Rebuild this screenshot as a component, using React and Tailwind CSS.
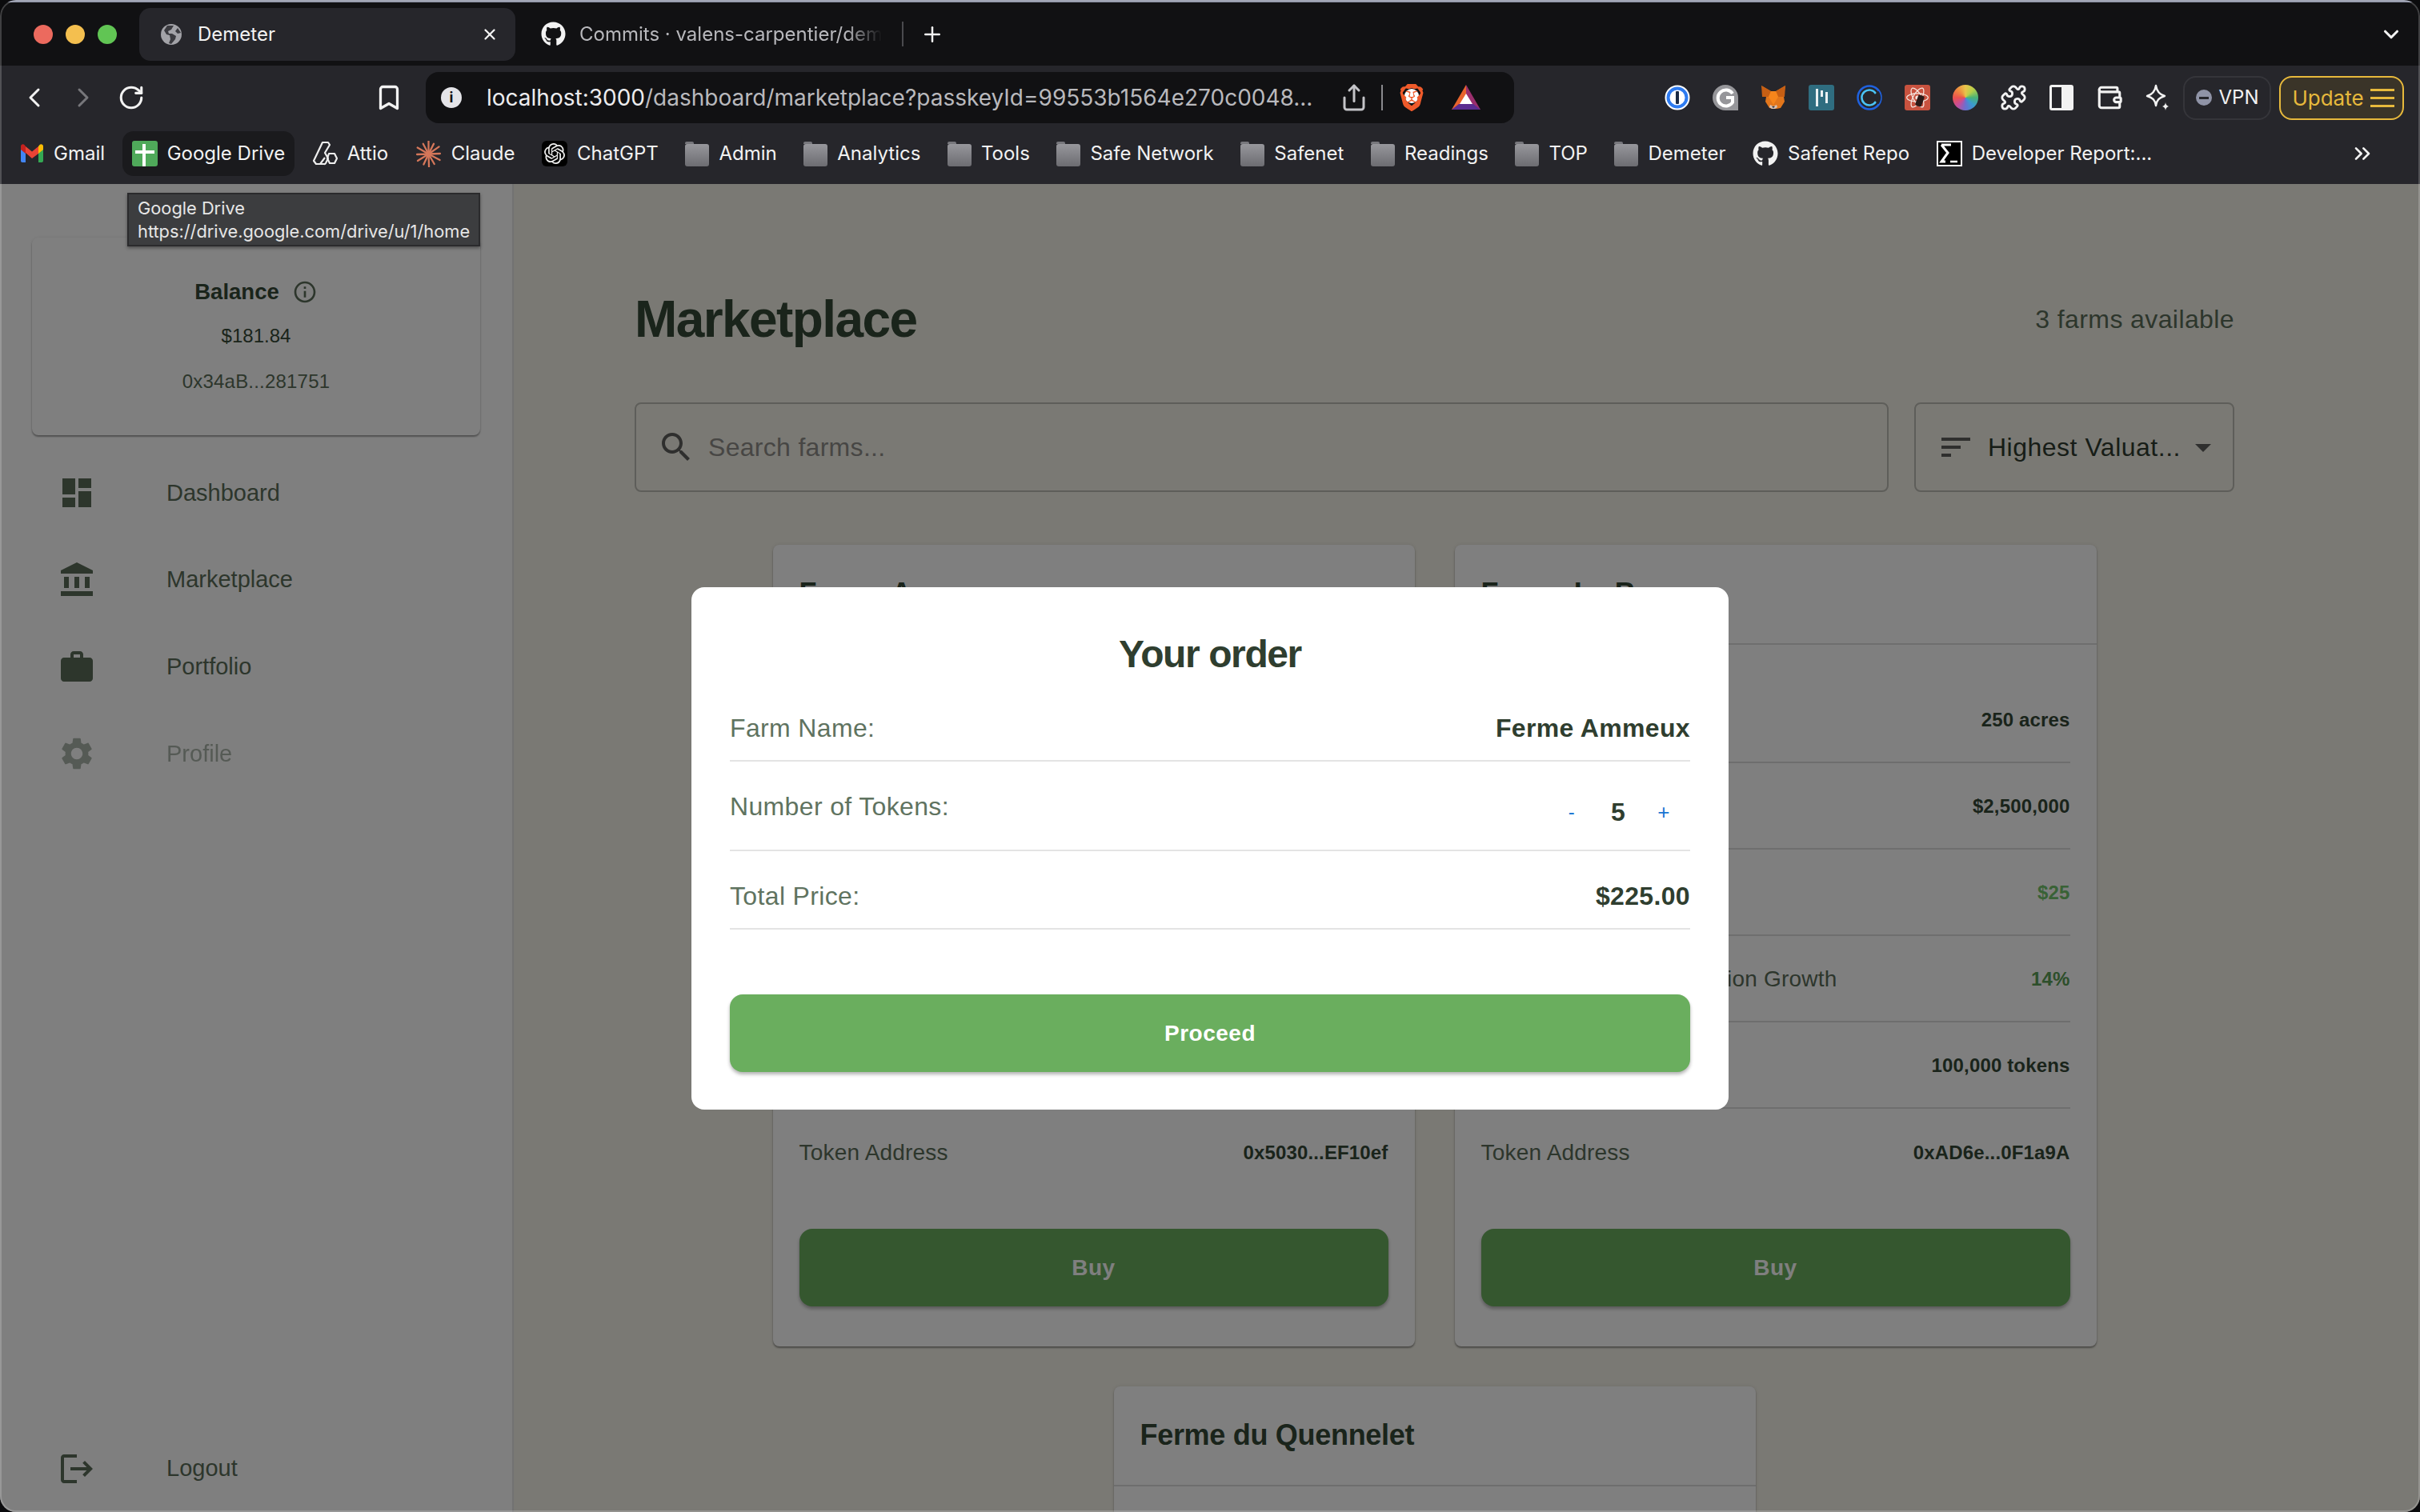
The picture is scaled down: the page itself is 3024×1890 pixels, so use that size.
import { ChevronLeft, ChevronRight, RotateCw, Bookmark, Share, Puzzle, Wallet, Plus, X, ChevronDown, ChevronsRight } from "lucide-react";
import { FaGithub } from "react-icons/fa";
import { SiOpenai, SiBrave, SiReact } from "react-icons/si";

/* ── MUI icon paths ─────────────────────────────────── */
const paths = {
  dashboard: "M3 13h8V3H3v10zm0 8h8v-6H3v6zm10 0h8V11h-8v10zm0-18v6h8V3h-8z",
  bank: "M4 10h3v7H4zM10.5 10h3v7h-3zM2 19h20v3H2zM17 10h3v7h-3zM12 1 2 6v2h20V6z",
  work: "M20 6h-4V4c0-1.11-.89-2-2-2h-4c-1.11 0-2 .89-2 2v2H4c-1.11 0-1.99.89-1.99 2L2 19c0 1.11.89 2 2 2h16c1.11 0 2-.89 2-2V8c0-1.11-.89-2-2-2zm-6 0h-4V4h4v2z",
  settings: "M19.14 12.94c.04-.3.06-.61.06-.94 0-.32-.02-.64-.07-.94l2.03-1.58c.18-.14.23-.41.12-.61l-1.92-3.32c-.12-.22-.37-.29-.59-.22l-2.39.96c-.5-.38-1.03-.7-1.62-.94l-.36-2.54c-.04-.24-.24-.41-.48-.41h-3.84c-.24 0-.43.17-.47.41l-.36 2.54c-.59.24-1.13.57-1.62.94l-2.39-.96c-.22-.08-.47 0-.59.22L2.74 8.87c-.12.21-.08.47.12.61l2.03 1.58c-.05.3-.09.63-.09.94s.02.64.07.94l-2.03 1.58c-.18.14-.23.41-.12.61l1.92 3.32c.12.22.37.29.59.22l2.39-.96c.5.38 1.03.7 1.62.94l.36 2.54c.05.24.24.41.48.41h3.84c.24 0 .44-.17.47-.41l.36-2.54c.59-.24 1.13-.56 1.62-.94l2.39.96c.22.08.47 0 .59-.22l1.92-3.32c.12-.22.07-.47-.12-.61l-2.01-1.58zM12 15.6c-1.98 0-3.6-1.62-3.6-3.6s1.62-3.6 3.6-3.6 3.6 1.62 3.6 3.6-1.62 3.6-3.6 3.6z",
  logout: "m17 7-1.41 1.41L18.17 11H8v2h10.17l-2.58 2.58L17 17l5-5zM4 5h8V3H4c-1.1 0-2 .9-2 2v14c0 1.1.9 2 2 2h8v-2H4V5z",
  search: "M15.5 14h-.79l-.28-.27C15.41 12.59 16 11.11 16 9.5 16 5.91 13.09 3 9.5 3S3 5.91 3 9.5 5.91 16 9.5 16c1.61 0 3.09-.59 4.23-1.57l.27.28v.79l5 4.99L20.49 19l-4.99-5zm-6 0C7.01 14 5 11.99 5 9.5S7.01 5 9.5 5 14 7.01 14 9.5 11.99 14 9.5 14z",
  sort: "M3 18h6v-2H3v2zM3 6v2h18V6H3zm0 7h12v-2H3v2z",
  caret: "m7 10 5 5 5-5z",
  info: "M11 7h2v2h-2zm0 4h2v6h-2zm1-9C6.48 2 2 6.48 2 12s4.48 10 10 10 10-4.48 10-10S17.52 2 12 2zm0 18c-4.41 0-8-3.59-8-8s3.59-8 8-8 8 3.59 8 8-3.59 8-8 8z",
};

function MuiIcon({ d, className }) {
  return (
    <svg viewBox="0 0 24 24" className={className} fill="currentColor">
      <path d={d} />
    </svg>
  );
}

/* ── Browser chrome icons ───────────────────────────── */
function Globe() {
  return (
    <svg viewBox="0 0 28 28" className="w-[28px] h-[28px]">
      <circle cx="14" cy="14" r="13" fill="#a3a3a8" />
      <path d="M9 3 5 9l3 5 4 1 1 5-2 5 3 1 5-6 1-4-5-3-4 0-1-3 4-2 3-5z" fill="#3b3b40" />
      <path d="M22 6l-3 4 3 3 4-1z" fill="#3b3b40" />
    </svg>
  );
}

function Gmail() {
  return (
    <svg viewBox="0 0 30 24" className="w-[30px] h-[24px]">
      <path d="M1 6v15c0 1.2.8 2 2 2h4V11z" fill="#4285f4" />
      <path d="M29 6v15c0 1.2-.8 2-2 2h-4V11z" fill="#34a853" />
      <path d="M23 3v9l6-5V3c0-2.5-2.800-3.500-4.500-2z" fill="#fbbc04" />
      <path d="M7 11V3l8 6.500L23 3v9l-8 6z" fill="#ea4335" />
      <path d="M1 3v4l6 5V3L5.500 1C3.800-.500 1 .500 1 3z" fill="#c5221f" />
    </svg>
  );
}

function DriveTile() {
  return (
    <div className="w-[32px] h-[32px] rounded-[3px] bg-[#4fa95a] relative">
      <div className="absolute left-[13px] top-[4px] bottom-0 w-[4px] bg-white" />
      <div className="absolute left-[4px] right-[4px] top-[12px] h-[4px] bg-white" />
    </div>
  );
}

function Attio() {
  return (
    <svg viewBox="0 0 32 32" className="w-[32px] h-[32px]" fill="none" stroke="#eee" strokeWidth="2.200" strokeLinejoin="round">
      <path d="M13 2h7l2 3-6 10 4 7-3 6a2 2 0 0 1-2 1H5l-3-4z" />
      <path d="M21 16l7 0 3 6-3 6-6 0-3-6z" />
      <path d="M10 29l6-8" />
    </svg>
  );
}

function Claude() {
  const rays = [0, 27, 55, 88, 118, 150, 178, 205, 238, 268, 300, 332];
  return (
    <svg viewBox="0 0 32 32" className="w-[33px] h-[33px]" stroke="#d5775a" strokeWidth="2.200" strokeLinecap="round">
      {rays.map((a, i) => (
        <line key={a} x1="16" y1="16" x2="16" y2={i % 2 ? 2 : 0.5} transform={`rotate(${a} 16 16)`} />
      ))}
    </svg>
  );
}

function Folder() {
  return (
    <svg viewBox="0 0 30 32" className="w-[30px] h-[32px]">
      <defs>
        <linearGradient id="folderFill" x1="0" y1="0" x2="0" y2="1">
          <stop offset="0" stopColor="#97979c" />
          <stop offset="1" stopColor="#6c6c71" />
        </linearGradient>
      </defs>
      <path d="M0 3a2 2 0 0 1 2-2h7a2 2 0 0 1 2 2v1H0z" fill="#77777c" />
      <rect x="0" y="4" width="30" height="28" rx="3" fill="url(#folderFill)" />
    </svg>
  );
}

function DevReport() {
  return (
    <svg viewBox="0 0 32 32" className="w-[32px] h-[32px]">
      <rect x="1" y="1" width="30" height="30" fill="#000" stroke="#fff" strokeWidth="2" />
      <path d="M6 5h12M6 5l8 10-8 11h5" fill="none" stroke="#fff" strokeWidth="3" />
      <path d="M17 26h9" stroke="#fff" strokeWidth="2.500" />
    </svg>
  );
}

function BatTriangle() {
  return (
    <svg viewBox="0 0 38 32" className="w-[38px] h-[32px]">
      <path d="M19 0 1 31h18z" fill="#e8642e" />
      <path d="M19 0l18 31H19z" fill="#9b2f6e" />
      <path d="M1 31l9-7h18l9 7z" fill="#5b2d91" />
      <path d="M19 11l8 13H11z" fill="#fff" />
    </svg>
  );
}

function OnePassword() {
  return (
    <svg viewBox="0 0 32 32" className="w-[32px] h-[32px]">
      <circle cx="16" cy="16" r="15.500" fill="#fff" />
      <circle cx="16" cy="16" r="11.500" fill="#fff" stroke="#2e7bf0" strokeWidth="4" />
      <rect x="14" y="8" width="4" height="16" rx="1" fill="#1a2a44" />
    </svg>
  );
}

function Grammarly() {
  return (
    <svg viewBox="0 0 32 32" className="w-[32px] h-[32px]">
      <path d="M16 0a16 16 0 0 1 16 16v16H16A16 16 0 0 1 16 0z" fill="#96969a" />
      <path d="M25 11a10 10 0 1 0 0 11v-6h-8" fill="none" stroke="#fff" strokeWidth="4" />
    </svg>
  );
}

function Fox() {
  return (
    <svg viewBox="0 0 32 32" className="w-[32px] h-[32px]">
      <path d="M1 1l12 7h6l12-7-2 14 1 6-5 8-5 1h-4l-5-1-5-8 1-6z" fill="#e2761b" />
      <path d="M1 1l12 7-3 7-8 0z" fill="#c65f14" />
      <path d="M31 1L19 8l3 7 8 0z" fill="#c65f14" />
      <path d="M13 8h6l3 7-6 10-6-10z" fill="#f6851b" />
      <path d="M12 25l4 2 4-2 1 3-3 2h-4l-3-2z" fill="#d7c1b3" />
      <path d="M14 27h4l-2 2z" fill="#233447" />
    </svg>
  );
}

function TealBars() {
  return (
    <div className="w-[32px] h-[32px] rounded-[3px] bg-[#2f6d80] flex items-center justify-center gap-[3px]">
      <div className="w-[3px] h-[22px] bg-white/90" />
      <div className="w-[3px] h-[8px] bg-white/90 mb-[10px]" />
      <div className="w-[3px] h-[14px] bg-white/90" />
    </div>
  );
}

function BlueC() {
  return (
    <svg viewBox="0 0 32 32" className="w-[32px] h-[32px]" fill="none">
      <circle cx="16" cy="16" r="14.500" stroke="#1f62e0" strokeWidth="2.500" />
      <path d="M24 11a9.500 9.500 0 1 0 0 10" stroke="#4bc4f5" strokeWidth="2.500" />
      <path d="M26 9a13 13 0 0 1 0 14" stroke="#26262b" strokeWidth="4" />
    </svg>
  );
}

function ReduxTile() {
  return (
    <div className="w-[32px] h-[32px] rounded-[3px] bg-[#c8523f] flex items-center justify-center relative">
      <SiReact size={28} color="#f5e6e0" />
      <div className="absolute w-[8px] h-[14px] bg-[#2a1a18] rotate-[20deg] rounded-[2px] left-[15px] top-[13px]" />
    </div>
  );
}

function PanelIcon() {
  return (
    <div className="w-[30px] h-[32px] border-[3px] border-[#f2f2f2] rounded-[3px] flex justify-end">
      <div className="w-[12px] bg-[#f2f2f2]" />
    </div>
  );
}

function Sparkle() {
  return (
    <svg viewBox="0 0 32 34" className="w-[32px] h-[34px]" fill="none" stroke="#f2f2f2" strokeWidth="2.400" strokeLinejoin="round">
      <path d="M14 2c1 7 4 11 11 13-7 2-10 5-11 12C13 20 10 17 3 15c7-2 10-6 11-13z" />
      <path d="M26 23c.5 3 1.500 4 4 5-2.500 1-3.500 2-4 5-.5-3-1.500-4-4-5 2.500-1 3.500-2 4-5z" fill="#f2f2f2" stroke="none" />
    </svg>
  );
}

/* ── Browser chrome ─────────────────────────────────── */
function TabBar() {
  return (
    <div className="h-[79px] bg-[#111113] flex items-center shrink-0">
      <div className="flex items-center gap-[16px] ml-[42px]">
        <div className="w-[24px] h-[24px] rounded-full bg-[#ec6a5e]" />
        <div className="w-[24px] h-[24px] rounded-full bg-[#f4bf4f]" />
        <div className="w-[24px] h-[24px] rounded-full bg-[#61c554]" />
      </div>
      <div className="ml-[28px] mt-[7px] mb-[6px] w-[470px] h-[66px] rounded-[14px] bg-[#26262b] flex items-center pl-[26px] pr-[21px] text-[#f2f2f2]">
        <Globe />
        <span className="ml-[19px] text-[24px]">Demeter</span>
        <X size={22} strokeWidth={2.500} className="ml-auto" />
      </div>
      <FaGithub size={31} color="#f2f2f2" className="ml-[32px]" />
      <span className="ml-[17px] w-[378px] overflow-hidden whitespace-nowrap text-[24px] text-[#b8b8bc] [mask-image:linear-gradient(90deg,#000_88%,transparent)]">
        Commits · valens-carpentier/demeter
      </span>
      <div className="ml-[25px] w-[2px] h-[31px] bg-[#4a4a4e]" />
      <Plus size={30} strokeWidth={2} color="#f2f2f2" className="ml-[21px]" />
      <ChevronDown size={30} strokeWidth={2.500} color="#f2f2f2" className="ml-auto mr-[21px]" />
    </div>
  );
}

function AddressRow() {
  const exts = [OnePassword, Grammarly, Fox, TealBars, BlueC, ReduxTile];
  return (
    <div className="flex items-center mt-[8px] h-[64px]">
      <div className="ml-[23px] w-[40px] flex justify-center"><ChevronLeft size={40} strokeWidth={1.800} color="#f2f2f2" /></div>
      <div className="ml-[21px] w-[40px] flex justify-center"><ChevronRight size={40} strokeWidth={1.800} color="#77777b" /></div>
      <div className="ml-[20px] w-[40px] flex justify-center"><RotateCw size={34} strokeWidth={2.200} color="#f2f2f2" /></div>
      <div className="ml-[282px] w-[40px] flex justify-center"><Bookmark size={36} strokeWidth={2.200} color="#f2f2f2" /></div>
      <div className="ml-[26px] w-[1360px] h-[64px] rounded-[16px] bg-[#111113] flex items-center">
        <div className="ml-[19px] w-[26px] h-[26px] rounded-full bg-[#e4e4e8] flex items-center justify-center text-[#111113] text-[18px] font-bold leading-none">i</div>
        <div className="ml-[31px] w-[1034px] whitespace-nowrap overflow-hidden text-[28px] text-[#b9b9bd]">
          <span className="text-[#ececee]">localhost:3000</span>/dashboard/marketplace?passkeyId=99553b1564e270c0048...
        </div>
        <Share size={36} strokeWidth={2} color="#c4c4c8" className="ml-[32px]" />
        <div className="ml-[16px] w-[2px] h-[32px] bg-[#8a8a8e]" />
        <div className="ml-[19px] w-[34px] flex justify-center relative">
          <div className="absolute w-[18px] h-[18px] top-[8px] bg-white rounded-full" />
          <SiBrave size={38} color="#ef5a2a" className="relative" />
        </div>
        <div className="ml-[32px]"><BatTriangle /></div>
      </div>
      <div className="ml-[184px] flex items-center gap-[20px]">
        {exts.map((Ext, i) => (
          <div key={i} className="w-[40px] flex justify-center"><Ext /></div>
        ))}
        <div className="w-[40px] flex justify-center">
          <div className="w-[32px] h-[32px] rounded-full bg-[conic-gradient(#e9c44b,#b6cf4a,#48b277,#3a9ad0,#6b6fd0,#c64d9b,#e9524f,#ee8a3f,#e9c44b)]" />
        </div>
        <div className="w-[40px] flex justify-center"><Puzzle size={34} strokeWidth={2} color="#f2f2f2" /></div>
        <div className="w-[40px] flex justify-center"><PanelIcon /></div>
        <div className="w-[40px] flex justify-center"><Wallet size={34} strokeWidth={2.200} color="#f2f2f2" /></div>
        <div className="w-[40px] flex justify-center"><Sparkle /></div>
      </div>
      <div className="ml-[12px] w-[110px] h-[55px] rounded-[16px] border-2 border-[#35353a] flex items-center justify-center gap-[9px] text-[24px] text-[#f2f2f2]">
        <div className="w-[20px] h-[20px] rounded-full bg-[#8f93a6] flex items-center justify-center">
          <div className="w-[12px] h-[3px] bg-[#26262b]" />
        </div>
        VPN
      </div>
      <div className="ml-[10px] w-[156px] h-[55px] pl-[4px] rounded-[16px] border-2 border-[#e7b93c] bg-[#3a3428] flex items-center justify-center gap-[8px] text-[26px] text-[#e7b93c]">
        Update
        <div className="flex flex-col gap-[7px]">
          <div className="w-[30px] h-[3px] bg-[#e7b93c]" />
          <div className="w-[30px] h-[3px] bg-[#e7b93c]" />
          <div className="w-[30px] h-[3px] bg-[#e7b93c]" />
        </div>
      </div>
    </div>
  );
}

const bookmarks = [
  { icon: <Gmail />, label: "Gmail" },
  { icon: <DriveTile />, label: "Google Drive", active: true },
  { icon: <Attio />, label: "Attio" },
  { icon: <Claude />, label: "Claude" },
  { icon: <div className="w-[32px] h-[32px] rounded-[6px] bg-black flex items-center justify-center"><SiOpenai size={26} color="#eee" /></div>, label: "ChatGPT" },
  { icon: <Folder />, label: "Admin" },
  { icon: <Folder />, label: "Analytics" },
  { icon: <Folder />, label: "Tools" },
  { icon: <Folder />, label: "Safe Network" },
  { icon: <Folder />, label: "Safenet" },
  { icon: <Folder />, label: "Readings" },
  { icon: <Folder />, label: "TOP" },
  { icon: <Folder />, label: "Demeter" },
  { icon: <FaGithub size={32} color="#f2f2f2" />, label: "Safenet Repo" },
  { icon: <DevReport />, label: "Developer Report:..." },
];

function BookmarkRow() {
  return (
    <div className="flex items-center mt-[10px] h-[56px] pl-[13px] gap-[9.600px] relative">
      {bookmarks.map((b) => (
        <div
          key={b.label}
          className={`flex items-center gap-[12px] h-[56px] px-[12px] rounded-[14px] text-[24px] text-[#f2f2f2] whitespace-nowrap ${b.active ? "bg-[#1a1a1d]" : ""}`}
        >
          {b.icon}
          {b.label}
        </div>
      ))}
      <ChevronsRight size={32} strokeWidth={2} color="#f2f2f2" className="absolute left-[2936px]" />
    </div>
  );
}

/* ── Sidebar ────────────────────────────────────────── */
const navItems = [
  { icon: paths.dashboard, label: "Dashboard" },
  { icon: paths.bank, label: "Marketplace" },
  { icon: paths.work, label: "Portfolio" },
  { icon: paths.settings, label: "Profile", muted: true },
];

function NavRow({ icon, label, muted }) {
  return (
    <div className={`h-[108.7px] flex items-center pl-[72px] ${muted ? "opacity-50" : ""}`}>
      <MuiIcon d={icon} className="w-[48px] h-[48px] text-[#5a6d58]" />
      <span className="ml-[88px] text-[29px] text-[#5a6d58]">{label}</span>
    </div>
  );
}

function Sidebar() {
  return (
    <aside className="w-[642px] shrink-0 bg-white border-r-2 border-[#e4e4e4] flex flex-col">
      <div className="mx-[40px] mt-[67px] h-[247px] rounded-[8px] bg-white shadow-[0_2px_2px_rgba(0,0,0,0.35),0_0_4px_rgba(0,0,0,0.08)] flex flex-col items-center pt-[50px]">
        <div className="flex items-center h-[36px]">
          <span className="text-[27.500px] font-bold text-[#344836]">Balance</span>
          <MuiIcon d={paths.info} className="ml-[16px] w-[32px] h-[32px] text-[#5a6d58]" />
        </div>
        <div className="mt-[19px] h-[36px] leading-[36px] text-[24px] text-[#344836]">$181.84</div>
        <div className="mt-[21px] h-[36px] leading-[36px] text-[24px] tracking-[0.200px] text-[#5a6d58]">0x34aB...281751</div>
      </div>
      <nav className="mt-[18px]">
        {navItems.map((n) => <NavRow key={n.label} {...n} />)}
      </nav>
      <div className="mt-auto">
        <NavRow icon={paths.logout} label="Logout" />
      </div>
    </aside>
  );
}

/* ── Marketplace ────────────────────────────────────── */
const farms = [
  {
    name: "Ferme Ammeux",
    address: "0x5030...EF10ef",
    rows: [["Farm Size", "180 acres"], ["Total Valuation", "$4,500,000"], ["Token Price", "$45"], ["Estimated Annual Valuation Growth", "12%"], ["Total Supply", "100,000 tokens"]],
  },
  {
    name: "Ferme Le Barroy",
    address: "0xAD6e...0F1a9A",
    rows: [["Farm Size", "250 acres"], ["Total Valuation", "$2,500,000"], ["Token Price", "$25"], ["Estimated Annual Valuation Growth", "14%"], ["Total Supply", "100,000 tokens"]],
  },
  {
    name: "Ferme du Quennelet",
    address: "0x7c1F...a20B4d",
    rows: [["Farm Size", "120 acres"], ["Total Valuation", "$1,800,000"], ["Token Price", "$18"], ["Estimated Annual Valuation Growth", "10%"], ["Total Supply", "100,000 tokens"]],
  },
];

function FarmRow({ label, value, valueClass, last }) {
  return (
    <div className={`h-[108px] pt-[2px] flex items-center justify-between ${last ? "" : "border-b-2 border-[#dcdcdc]"}`}>
      <span className="text-[28px] tracking-[0.200px] text-[#5a6d58] whitespace-nowrap">{label}</span>
      <span className={`text-[24px] tracking-[0.150px] font-bold whitespace-nowrap ${valueClass}`}>{value}</span>
    </div>
  );
}

function FarmCard({ farm }) {
  const tones = ["text-[#344836]", "text-[#344836]", "text-[#72c46c]", "text-[#5a9e56]", "text-[#344836]"];
  return (
    <div className="w-[802px] rounded-[8px] bg-white shadow-[0_2px_2px_rgba(0,0,0,0.35),0_0_4px_rgba(0,0,0,0.1)]">
      <div className="h-[125px] pb-[2px] px-[33px] flex items-center border-b-2 border-[#dcdcdc] text-[36px] tracking-[-0.300px] font-bold text-[#344836]">
        {farm.name}
      </div>
      <div className="px-[33px] pt-[40px] pb-[50px]">
        {farm.rows.map(([label, value], i) => (
          <FarmRow key={label} label={label} value={value} valueClass={tones[i]} />
        ))}
        <FarmRow label="Token Address" value={farm.address} valueClass="text-[#344836]" last />
        <button className="mt-[42px] w-full h-[97px] rounded-[16px] bg-[#6aae5e] text-white text-[28px] font-bold tracking-[0.5px] shadow-[0_3px_4px_rgba(0,0,0,0.3)]">
          Buy
        </button>
      </div>
    </div>
  );
}

function Marketplace() {
  return (
    <main className="flex-1 min-w-0 bg-[#f4f2e8] pl-[151px] pr-[232px] pt-[133px]">
      <div className="flex items-center justify-between h-[72px]">
        <h1 className="text-[64px] font-bold tracking-[-1.600px] text-[#344836]">Marketplace</h1>
        <span className="text-[32px] tracking-[0.400px] text-[#5a6d58]">3 farms available</span>
      </div>
      <div className="mt-[68px] flex gap-[32px]">
        <div className="w-[1567px] h-[112px] rounded-[8px] border-2 border-[#bdbcb4] flex items-center pl-[26px] text-[32px] tracking-[0.300px] text-[#8e8d89]">
          <MuiIcon d={paths.search} className="w-[48px] h-[48px] text-[#5e5e5c]" />
          <span className="ml-[16px]">Search farms...</span>
        </div>
        <div className="w-[400px] h-[112px] rounded-[8px] border-2 border-[#bdbcb4] flex items-center pl-[26px] text-[32px] tracking-[0.500px] text-[#2f3a2f] whitespace-nowrap">
          <MuiIcon d={paths.sort} className="w-[48px] h-[48px] text-[#5e5e5c]" />
          <span className="ml-[16px]">Highest Valuat...</span>
          <MuiIcon d={paths.caret} className="ml-[4px] w-[48px] h-[48px] text-[#5e5e5c]" />
        </div>
      </div>
      <div className="mt-[66px] flex flex-wrap justify-center gap-[50px]">
        {farms.map((f) => <FarmCard key={f.name} farm={f} />)}
      </div>
    </main>
  );
}

/* ── Order dialog ───────────────────────────────────── */
function OrderDialog() {
  return (
    <div className="mt-[1px] w-[1296px] h-[653px] rounded-[16px] bg-white px-[48px] pt-[48px] pb-[47px] flex flex-col text-[32px] leading-[36px] tracking-[0.350px]">
      <h2 className="h-[72px] leading-[72px] text-center text-[48px] font-bold tracking-[-1.400px] text-[#2f3e2f]">Your order</h2>
      <div className="pt-[38px] pb-[22px] flex justify-between border-b-2 border-[#e4e4e4]">
        <span className="text-[#5f7360]">Farm Name:</span>
        <span className="font-bold text-[#2f3e2f]">Ferme Ammeux</span>
      </div>
      <div className="pt-[38px] pb-[29px] flex justify-between border-b-2 border-[#e4e4e4]">
        <span className="text-[#5f7360]">Number of Tokens:</span>
        <div className="mt-[7px] flex items-center font-bold text-[#2f3e2f]">
          <span className="w-[20px] text-center text-[24px] font-normal text-[#1976d2]">-</span>
          <span className="ml-[33px] w-[30px] text-center">5</span>
          <span className="ml-[30px] w-[24px] text-center text-[26px] font-normal text-[#1976d2]">+</span>
          <span className="w-[21px]" />
        </div>
      </div>
      <div className="pt-[38px] pb-[22px] flex justify-between border-b-2 border-[#e4e4e4]">
        <span className="text-[#5f7360]">Total Price:</span>
        <span className="font-bold text-[#2f3e2f]">$225.00</span>
      </div>
      <button className="mt-[81px] h-[97px] rounded-[16px] bg-[#6aae5e] text-white text-[28px] font-bold tracking-[0.500px] shadow-[0_3px_4px_rgba(0,0,0,0.3)]">
        Proceed
      </button>
    </div>
  );
}

export default function App() {
  return (
    <div className="w-[3024px] h-[1890px] bg-[#0b0b0d] overflow-hidden [font-family:'Liberation_Sans',Arial,sans-serif]">
      <div className="relative w-full h-full rounded-[20px] overflow-hidden flex flex-col">
        <div className="h-[3px] bg-[#8b90a3] shrink-0" />
        {/* Browser chrome */}
        <div className="shrink-0 [font-family:Inter,sans-serif]">
          <TabBar />
          <div className="h-[148px] bg-[#26262b] flex flex-col">
            <AddressRow />
            <BookmarkRow />
          </div>
        </div>

        {/* Page with dialog open */}
        <div className="relative flex-1 min-h-0 flex overflow-hidden">
          <Sidebar />
          <Marketplace />
          <div className="absolute inset-0 bg-black/50 flex items-center justify-center">
            <OrderDialog />
          </div>
          {/* Browser tooltip */}
          <div className="absolute left-[159px] top-[11px] w-[441px] h-[67px] bg-[#3c3d3f] border-2 border-[#2a2a2c] shadow-[0_2px_4px_rgba(0,0,0,0.4)] px-[11px] flex flex-col justify-center text-[21.800px] leading-[29px] text-[#e6e6e6] [font-family:Inter,sans-serif] whitespace-nowrap">
            <span>Google Drive</span>
            <span>https://drive.google.com/drive/u/1/home</span>
          </div>
        </div>
        <div className="absolute inset-0 rounded-[20px] border-2 border-white/20 pointer-events-none" />
      </div>
    </div>
  );
}
